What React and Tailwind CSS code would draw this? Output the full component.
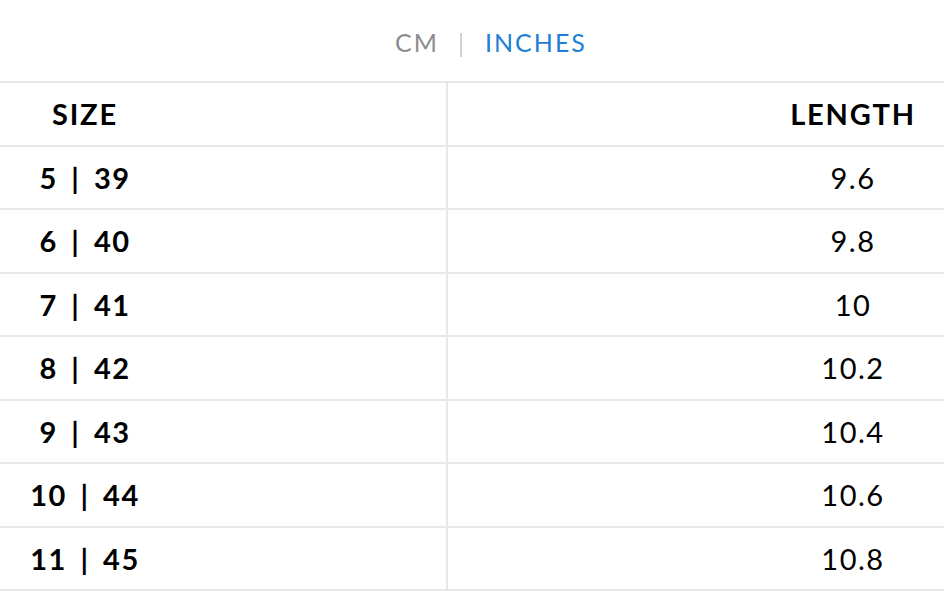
import React from 'react';

// Size chart rows: shoe size (US | EU) and foot length in inches
const rows = [
  { size: '5 | 39', length: '9.6' },
  { size: '6 | 40', length: '9.8' },
  { size: '7 | 41', length: '10' },
  { size: '8 | 42', length: '10.2' },
  { size: '9 | 43', length: '10.4' },
  { size: '10 | 44', length: '10.6' },
  { size: '11 | 45', length: '10.8' },
];

function Row({ left, right, head }) {
  const rightStyle = head ? 'font-bold tracking-[1.8px]' : 'font-normal tracking-[1.5px]';
  const leftStyle = head ? 'tracking-[1.8px]' : 'tracking-[1.5px] [word-spacing:5px]';
  return (
    <div className="grid grid-cols-[448px_1fr] h-[63.5px] border-b-2 border-[#e8e8e8]">
      <div className="flex items-center border-r-2 border-[#e8e8e8]">
        <span className={`w-[170px] text-center text-[29px] font-bold text-black ${leftStyle}`}>{left}</span>
      </div>
      <div className="flex items-center justify-end">
        <span className={`w-[182px] text-center text-[29px] text-black ${rightStyle}`}>{right}</span>
      </div>
    </div>
  );
}

export default function App() {
  return (
    <div className="w-[944px] h-[602px] bg-white overflow-hidden font-['Lato','Liberation_Sans',sans-serif]">
      {/* Unit switch */}
      <div className="h-[81px] flex items-center justify-center gap-[19px] pl-[38px] pt-[4px] text-[25px] tracking-[2px]">
        <span className="text-[#8c8c8c]">CM</span>
        <span className="text-[#a8a8a8] font-light">|</span>
        <span className="text-[#1f80d6]">INCHES</span>
      </div>

      {/* Table */}
      <div className="border-t-2 border-[#e8e8e8]">
        <Row left="SIZE" right="LENGTH" head />
        {rows.map((r) => (
          <Row key={r.size} left={r.size} right={r.length} />
        ))}
      </div>
    </div>
  );
}
